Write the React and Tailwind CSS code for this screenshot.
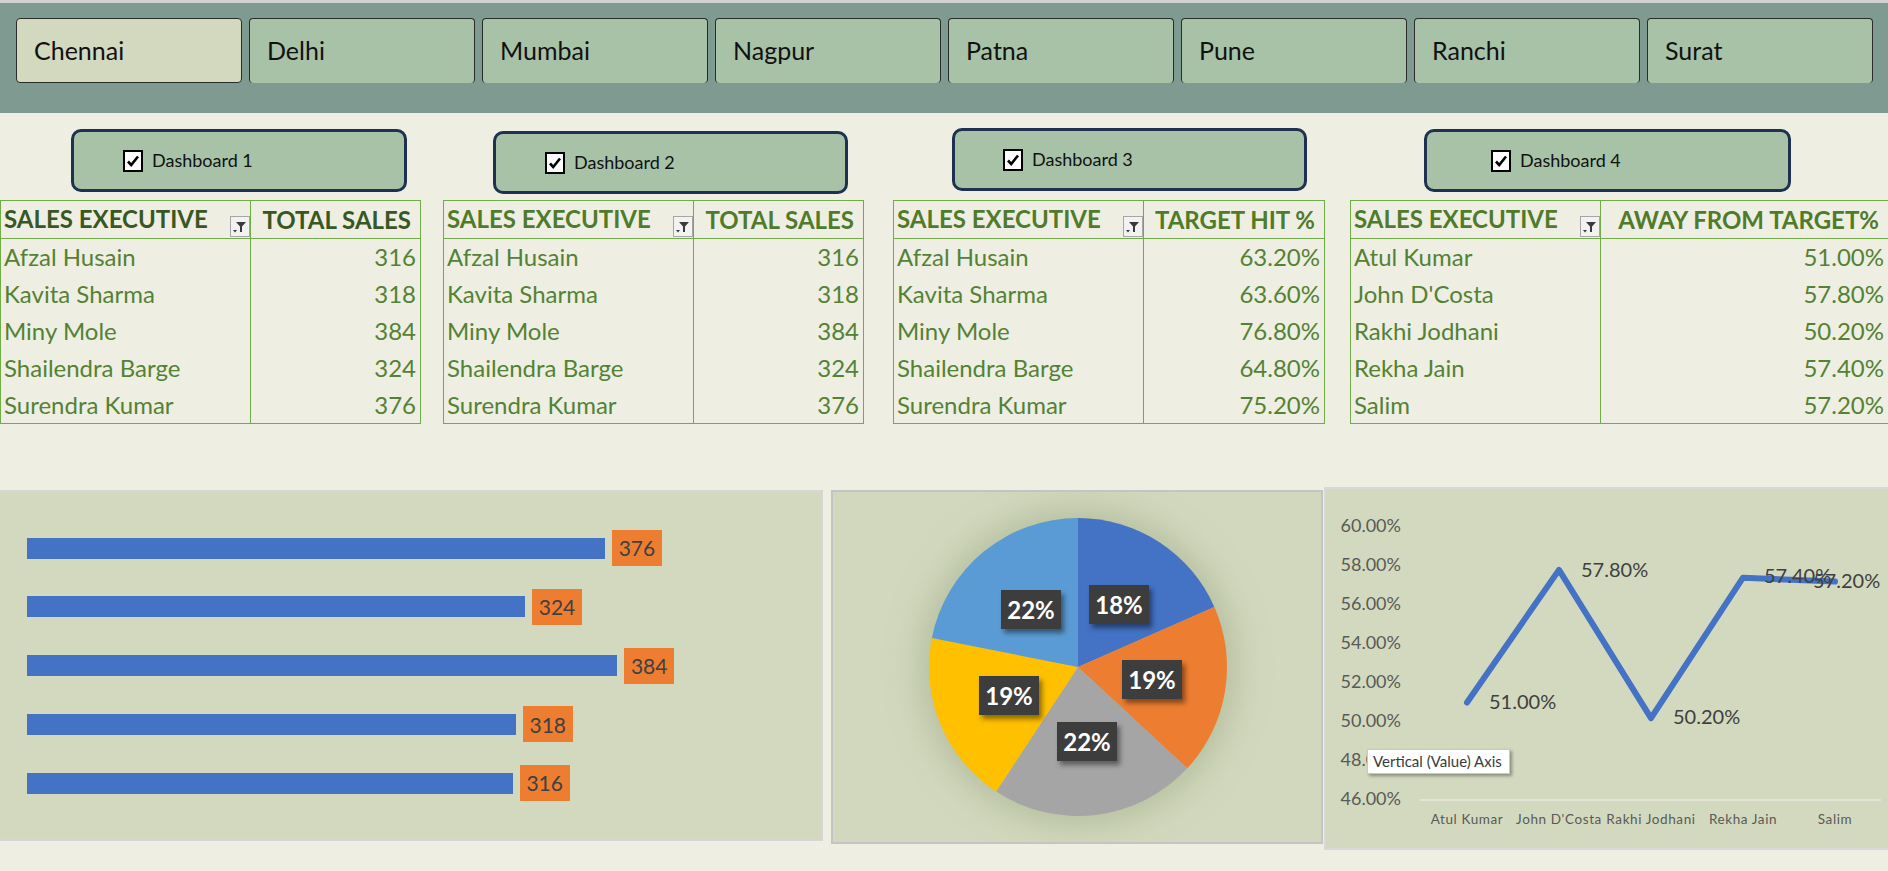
import React from 'react';

// --- Mock Data ---
const CITIES = ['Chennai', 'Delhi', 'Mumbai', 'Nagpur', 'Patna', 'Pune', 'Ranchi', 'Surat'];

const DASHBOARDS = [
  { id: 1, label: 'Dashboard 1', cls: 'ml-[71px] mt-[16px] w-[336px] pl-[49px]' },
  { id: 2, label: 'Dashboard 2', cls: 'ml-[86px] mt-[18px] w-[355px] pl-[49px]' },
  { id: 3, label: 'Dashboard 3', cls: 'ml-[104px] mt-[15px] w-[355px] pl-[48px]' },
  { id: 4, label: 'Dashboard 4', cls: 'ml-[117px] mt-[16px] w-[367px] pl-[64px]' },
];

const TABLES = [
  {
    id: 't1', cls: 'w-[421px]', head: 'text-[#385723]', col: 'TOTAL SALES',
    rows: [['Afzal Husain', '316'], ['Kavita Sharma', '318'], ['Miny Mole', '384'], ['Shailendra Barge', '324'], ['Surendra Kumar', '376']],
  },
  {
    id: 't2', cls: 'w-[421px] ml-[22px]', head: 'text-[#4f7b2b]', col: 'TOTAL SALES',
    rows: [['Afzal Husain', '316'], ['Kavita Sharma', '318'], ['Miny Mole', '384'], ['Shailendra Barge', '324'], ['Surendra Kumar', '376']],
  },
  {
    id: 't3', cls: 'w-[432px] ml-[29px]', head: 'text-[#4f7b2b]', col: 'TARGET HIT %',
    rows: [['Afzal Husain', '63.20%'], ['Kavita Sharma', '63.60%'], ['Miny Mole', '76.80%'], ['Shailendra Barge', '64.80%'], ['Surendra Kumar', '75.20%']],
  },
  {
    id: 't4', cls: 'w-[539px] ml-[25px]', head: 'text-[#4f7b2b]', col: 'AWAY FROM TARGET%',
    rows: [['Atul Kumar', '51.00%'], ["John D'Costa", '57.80%'], ['Rakhi Jodhani', '50.20%'], ['Rekha Jain', '57.40%'], ['Salim', '57.20%']],
  },
];

const BARS = [376, 324, 384, 318, 316];

const PIE = [
  { v: 316, c: '#4472c4', label: '18%', cls: 'left-[256px] top-[93px]' },
  { v: 318, c: '#ed7d31', label: '19%', cls: 'left-[289px] top-[168px]' },
  { v: 384, c: '#a5a5a5', label: '22%', cls: 'left-[224px] top-[230px]' },
  { v: 324, c: '#ffc000', label: '19%', cls: 'left-[146px] top-[184px]' },
  { v: 376, c: '#5b9bd5', label: '22%', cls: 'left-[168px] top-[98px]' },
];

const LINE = [
  { name: 'Atul Kumar', v: 51.0, lx: 163, ly: 215 },
  { name: "John D'Costa", v: 57.8, lx: 255, ly: 83 },
  { name: 'Rakhi Jodhani', v: 50.2, lx: 347, ly: 230 },
  { name: 'Rekha Jain', v: 57.4, lx: 438, ly: 89 },
  { name: 'Salim', v: 57.2, lx: 487, ly: 94 },
];

const AXIS = [60, 58, 56, 54, 52, 50, 48, 46];

const yOf = (v) => 38 + (60 - v) * 19.5;

const FilterIcon = () => (
  <svg width="20" height="21" viewBox="0 0 20 21" className="shrink-0">
    <rect x="0.5" y="0.5" width="19" height="20" fill="#f2f2f2" stroke="#a6a6a6" />
    <polygon points="6,6 16,6 12,10.5 12,16 10,16 10,10.5" fill="#3a3a3a" />
    <polygon points="3,14 7,14 5,16.5" fill="#3a3a3a" />
  </svg>
);

const CheckBox = () => (
  <div className="w-[20px] h-[22px] border-2 border-black bg-white flex items-center justify-center shrink-0">
    <svg width="14" height="14" viewBox="0 0 14 14">
      <path d="M2 7.5 L5.2 11 L12 2.5" fill="none" stroke="#000" strokeWidth="2.6" />
    </svg>
  </div>
);

const slicePath = (cx, cy, r, a0, a1) => {
  const x0 = cx + r * Math.sin(a0);
  const y0 = cy - r * Math.cos(a0);
  const x1 = cx + r * Math.sin(a1);
  const y1 = cy - r * Math.cos(a1);
  const large = a1 - a0 > Math.PI ? 1 : 0;
  return `M${cx} ${cy} L${x0} ${y0} A${r} ${r} 0 ${large} 1 ${x1} ${y1} Z`;
};

const PieChart = () => {
  const total = PIE.reduce((s, p) => s + p.v, 0);
  let acc = 0;
  const cx = 245;
  const cy = 175;
  const r = 149;
  return (
    <div className="relative w-[492px] h-[354px] shrink-0 ml-[8px] mt-[1px] bg-[#d2d8bd] border-2 border-[#c4c4c4]">
      <svg width="488" height="350" className="block">
        <defs>
          <filter id="glow" x="-50%" y="-50%" width="200%" height="200%">
            <feGaussianBlur stdDeviation="18" />
          </filter>
        </defs>
        <circle cx={cx} cy={cy} r={r + 8} fill="#a9b392" opacity="0.75" filter="url(#glow)" />
        {PIE.map((p) => {
          const a0 = (acc / total) * Math.PI * 2;
          acc += p.v;
          const a1 = (acc / total) * Math.PI * 2;
          return <path key={p.c} d={slicePath(cx, cy, r, a0, a1)} fill={p.c} />;
        })}
      </svg>
      {PIE.map((p) => (
        <div
          key={p.c + p.label}
          className={`absolute ${p.cls} w-[60px] h-[39px] bg-[#3d3d3d] shadow-[3px_4px_5px_rgba(0,0,0,0.45)] flex items-center justify-center text-white font-bold text-[24px]`}
        >
          {p.label}
        </div>
      ))}
    </div>
  );
};

const LineChart = () => {
  const pts = LINE.map((d, i) => `${141 + i * 92},${yOf(d.v)}`).join(' ');
  return (
    <div className="relative w-[570px] h-[363px] shrink-0 ml-[1px] mt-[-2px] bg-[#d3d9be] border-2 border-[#d8d8d8]">
      <svg width="566" height="359" className="block">
        {AXIS.map((v) => (
          <text key={v} x="75" y={yOf(v)} textAnchor="end" dominantBaseline="middle" fontSize="18" fill="#595959" fontFamily="Lato, sans-serif">
            {v.toFixed(2)}%
          </text>
        ))}
        <line x1="94" y1={yOf(46)} x2="555" y2={yOf(46)} stroke="#e2e5d6" strokeWidth="2" />
        {LINE.map((d, i) => (
          <text key={d.name} x={141 + i * 92} y="332" textAnchor="middle" dominantBaseline="middle" fontSize="13.5" fill="#595959" letterSpacing="0.6" fontFamily="Lato, sans-serif">
            {d.name}
          </text>
        ))}
        <polyline points={pts} fill="none" stroke="#4472c4" strokeWidth="6" strokeLinejoin="round" strokeLinecap="round" />
        {LINE.map((d) => (
          <text key={d.name + 'l'} x={d.lx} y={d.ly} dominantBaseline="middle" fontSize="20" fill="#404040" fontFamily="Lato, sans-serif">
            {d.v.toFixed(2)}%
          </text>
        ))}
      </svg>
      {/* tooltip */}
      <div className="absolute left-[41px] top-[260px] w-[143px] h-[25px] bg-white border border-[#c8c8c8] shadow-[2px_2px_3px_rgba(0,0,0,0.35)] flex items-center pl-[5px] text-[15px] text-[#3b3b3b] whitespace-nowrap">
        Vertical (Value) Axis
      </div>
    </div>
  );
};

const App = () => {
  return (
    <div className="w-[1888px] h-[871px] overflow-hidden bg-[#eeefe2] font-['Lato',sans-serif]">
      <div className="h-[3px] bg-[#cfd2cf]" />

      {/* City tabs */}
      <header className="h-[110px] bg-[#7f9a90] pl-[16px] pt-[15px] flex gap-[7px] items-start">
        {CITIES.map((c, i) => (
          <div
            key={c}
            className={`w-[226px] h-[65px] shrink-0 rounded-[4px] border border-[#2b2b2b] flex items-center pl-[17px] text-[25px] text-[#111] ${i === 0 ? 'bg-[#d3d9bf]' : 'bg-[#a8c2a8] border-b-0'}`}
          >
            {c}
          </div>
        ))}
      </header>

      {/* Dashboard toggles */}
      <div className="h-[87px] flex items-start">
        {DASHBOARDS.map((d) => (
          <div
            key={d.id}
            className={`${d.cls} h-[63px] shrink-0 rounded-[10px] border-[3px] border-[#1f3150] bg-[#a8c2a8] flex items-center gap-[9px] text-[18px] text-[#111]`}
          >
            <CheckBox />
            <span>{d.label}</span>
          </div>
        ))}
      </div>

      {/* Tables */}
      <div className="h-[289px] flex items-start">
        {TABLES.map((t) => (
          <div key={t.id} className={`${t.cls} shrink-0 border border-[#70ad47] grid grid-cols-[250px_1fr]`}>
            <div className={`h-[38px] border-r border-b border-[#70ad47] flex items-end justify-between pl-[3px] pb-[1px] ${t.head}`}>
              <span className="self-center font-bold text-[24px] whitespace-nowrap">SALES EXECUTIVE</span>
              <FilterIcon />
            </div>
            <div className={`h-[38px] border-b border-[#70ad47] flex items-center justify-end pr-[9px] font-bold text-[24px] whitespace-nowrap ${t.head}`}>
              {t.col}
            </div>
            {t.rows.map(([name, val]) => (
              <React.Fragment key={name}>
                <div className="h-[36.8px] border-r border-[#70ad47] flex items-center pl-[3px] text-[24px] text-[#548235] whitespace-nowrap">
                  {name}
                </div>
                <div className="h-[36.8px] flex items-center justify-end pr-[4px] text-[24px] text-[#548235]">
                  {val}
                </div>
              </React.Fragment>
            ))}
          </div>
        ))}
      </div>

      {/* Charts */}
      <div className="flex items-start">
        <div className="w-[823px] h-[351px] shrink-0 mt-[1px] bg-[#d3d9bf] border-2 border-l-0 border-[#d6d6d6] pl-[27px] pt-[38px] flex flex-col gap-[22.75px]">
          {BARS.map((v, i) => (
            <div key={i} className="flex items-center h-[36px]">
              <div className="h-[21px] bg-[#4472c4]" style={{ width: v * 1.537 }} />
              <div className="ml-[7px] w-[50px] h-[36px] bg-[#ed7d31] flex items-center justify-center text-[21px] text-[#404040]">
                {v}
              </div>
            </div>
          ))}
        </div>
        <PieChart />
        <LineChart />
      </div>
    </div>
  );
};

export default App;
